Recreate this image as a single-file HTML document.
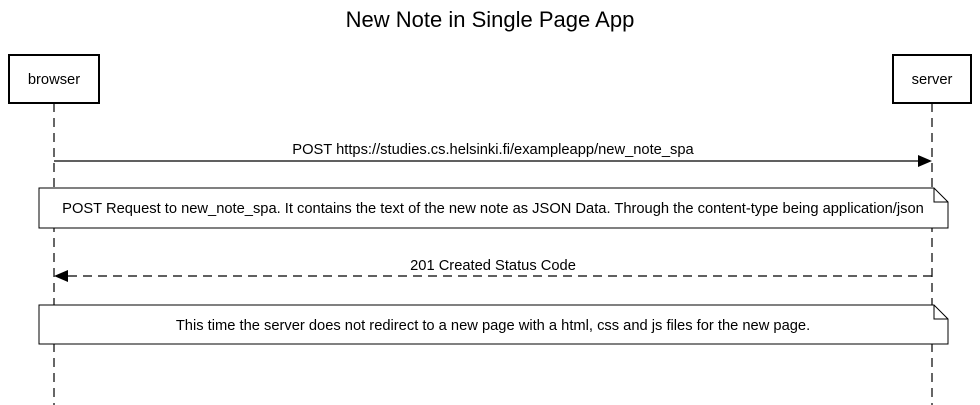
<!DOCTYPE html>
<html><head><style>body{margin:0;background:#fff}svg{display:block}text{font-family:"Liberation Sans",Arial,sans-serif;fill:#000}</style></head>
<body>
<svg width="980" height="405" viewBox="0 0 980 405" xmlns="http://www.w3.org/2000/svg">
<text x="490" y="27" font-size="22" text-anchor="middle">New Note in Single Page App</text>
<line x1="54" y1="103" x2="54" y2="405" stroke="#000" stroke-width="1.2" stroke-dasharray="9,6"/>
<line x1="932" y1="103" x2="932" y2="405" stroke="#000" stroke-width="1.2" stroke-dasharray="9,6"/>
<rect x="9" y="55" width="90" height="48" fill="#fff" stroke="#000" stroke-width="2"/>
<text x="54" y="84" font-size="14.7" text-anchor="middle">browser</text>
<rect x="893" y="55" width="78" height="48" fill="#fff" stroke="#000" stroke-width="2"/>
<text x="932" y="84" font-size="14.7" text-anchor="middle">server</text>
<text x="493" y="154" font-size="14.7" text-anchor="middle">POST https://studies.cs.helsinki.fi/exampleapp/new_note_spa</text>
<line x1="54" y1="161" x2="918" y2="161" stroke="#000" stroke-width="1.2"/>
<polygon points="918,155 932,161 918,167" fill="#000"/>
<path d="M39 188 H934 L948 202 V228 H39 Z" fill="#fff" stroke="#000" stroke-width="1"/>
<path d="M934 188 V202 H948" fill="none" stroke="#000" stroke-width="1"/>
<text x="493" y="213" font-size="14.7" text-anchor="middle">POST Request to new_note_spa. It contains the text of the new note as JSON Data. Through the content-type being application/json</text>
<text x="493" y="270" font-size="14.7" text-anchor="middle">201 Created Status Code</text>
<line x1="68" y1="276" x2="932" y2="276" stroke="#000" stroke-width="1.2" stroke-dasharray="9,6"/>
<polygon points="68,270 54,276 68,282" fill="#000"/>
<path d="M39 305 H934 L948 319 V344 H39 Z" fill="#fff" stroke="#000" stroke-width="1"/>
<path d="M934 305 V319 H948" fill="none" stroke="#000" stroke-width="1"/>
<text x="493" y="330" font-size="14.7" text-anchor="middle">This time the server does not redirect to a new page with a html, css and js files for the new page.</text>
</svg>
</body></html>
